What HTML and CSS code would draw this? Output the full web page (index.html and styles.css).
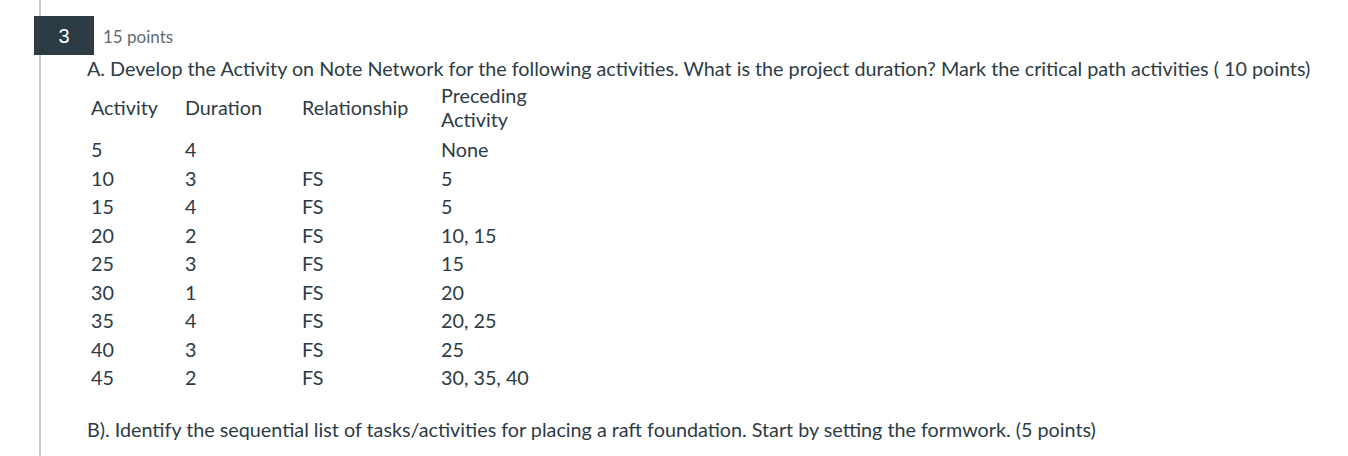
FILE: index.html
```html
<!DOCTYPE html>
<html>
<head>
<meta charset="utf-8">
<link rel="stylesheet" href="styles.css">
</head>
<body>
<div class="question">
  <div class="qnum">3</div>
  <div class="header"><span class="points">15 points</span></div>
  <div class="content">
    <p class="para">A. Develop the Activity on Note Network for the following activities. What is the project duration? Mark the critical path activities ( 10 points)</p>
    <table class="acts">
      <thead>
        <tr><th class="c1">Activity</th><th class="c2">Duration</th><th class="c3">Relationship</th><th class="c4">Preceding<br>Activity</th></tr>
      </thead>
      <tbody>
        <tr><td>5</td><td>4</td><td></td><td>None</td></tr>
        <tr><td>10</td><td>3</td><td>FS</td><td>5</td></tr>
        <tr><td>15</td><td>4</td><td>FS</td><td>5</td></tr>
        <tr><td>20</td><td>2</td><td>FS</td><td>10, 15</td></tr>
        <tr><td>25</td><td>3</td><td>FS</td><td>15</td></tr>
        <tr><td>30</td><td>1</td><td>FS</td><td>20</td></tr>
        <tr><td>35</td><td>4</td><td>FS</td><td>20, 25</td></tr>
        <tr><td>40</td><td>3</td><td>FS</td><td>25</td></tr>
        <tr><td>45</td><td>2</td><td>FS</td><td>30, 35, 40</td></tr>
      </tbody>
    </table>
    <p class="para partb">B). Identify the sequential list of tasks/activities for placing a raft foundation. Start by setting the formwork. (5 points)</p>
  </div>
</div>
</body>
</html>
```

FILE: styles.css
```css
html, body {
  margin: 0;
  padding: 0;
  background: #ffffff;
}
body {
  font-family: Lato, "Liberation Sans", sans-serif;
  color: #2d3b45;
  height: 456px;
  overflow: hidden;
}
.question {
  position: relative;
  margin-left: 39px;
  border-left: 2px solid #c7cdd1;
  min-height: 456px;
  padding: 16px 0 0 46px;
  box-sizing: border-box;
}
.qnum {
  position: absolute;
  left: -7px;
  top: 16px;
  width: 60px;
  height: 39px;
  background: #2d3b45;
  color: #ffffff;
  font-family: "Liberation Sans", Arial, sans-serif;
  font-size: 20px;
  line-height: 40px;
  text-align: center;
}
.header {
  height: 41px;
  display: flex;
  align-items: center;
  margin-left: -46px;
  padding-left: 62px;
}
.points {
  font-size: 17px;
  color: #5f6b73;
}
.content {
  font-size: 19.75px;
  margin-top: -2px;
}
.para {
  margin: 0;
  line-height: 28px;
}
.acts {
  border-collapse: collapse;
  margin-top: -2px;
  margin-left: 0;
}
.acts th, .acts td {
  text-align: left;
  font-weight: normal;
  padding: 3px 4px;
  line-height: 22.5px;
  vertical-align: middle;
}
.acts th {
  line-height: 24px;
}
.acts tbody tr:first-child td {
  padding-top: 4px;
}
.c1 { width: 86px; }
.c2 { width: 109px; }
.c3 { width: 131px; }
.c4 { width: 120px; }
.partb {
  margin-top: 23px;
}
```
